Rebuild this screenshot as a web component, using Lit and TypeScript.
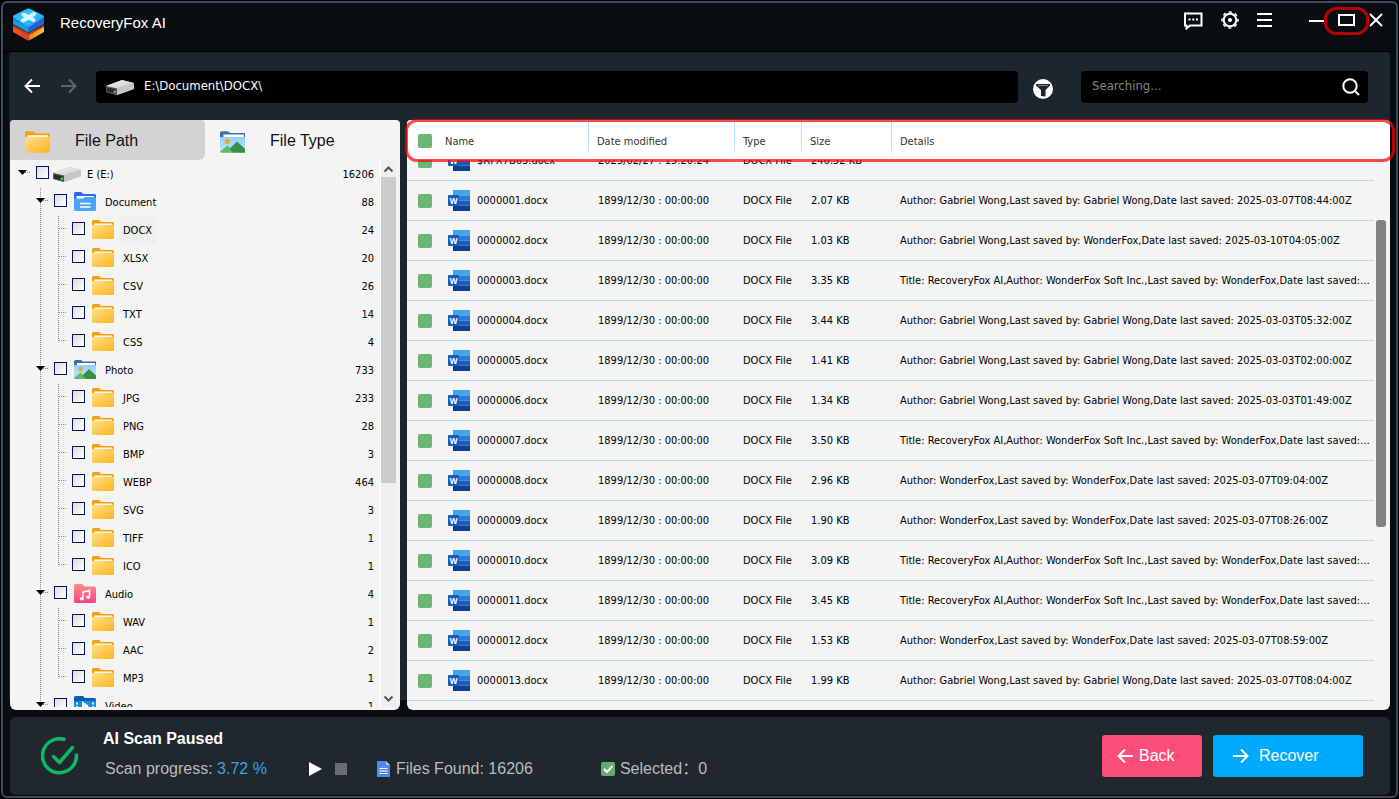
import { LitElement, html, css, svg, nothing } from "lit";
import { customElement } from "lit/decorators.js";
import { classMap } from "lit/directives/class-map.js";

type Kind = "drive" | "document" | "photo" | "audio" | "video" | "folder";
interface TreeRow { label: string; count: number; level: 0 | 1 | 2; kind: Kind; last?: boolean; selected?: boolean }
interface FileRow { name: string; date: string; size: string; details: string }

const leaf = (label: string, count: number, extra: Partial<TreeRow> = {}): TreeRow =>
  ({ label, count, level: 2, kind: "folder", ...extra });

const TREE: TreeRow[] = [
  { label: "E (E:)", count: 16206, level: 0, kind: "drive" },
  { label: "Document", count: 88, level: 1, kind: "document" },
  leaf("DOCX", 24, { selected: true }), leaf("XLSX", 20), leaf("CSV", 26), leaf("TXT", 14), leaf("CSS", 4, { last: true }),
  { label: "Photo", count: 733, level: 1, kind: "photo" },
  leaf("JPG", 233), leaf("PNG", 28), leaf("BMP", 3), leaf("WEBP", 464), leaf("SVG", 3), leaf("TIFF", 1), leaf("ICO", 1, { last: true }),
  { label: "Audio", count: 4, level: 1, kind: "audio" },
  leaf("WAV", 1), leaf("AAC", 2), leaf("MP3", 1, { last: true }),
  { label: "Video", count: 1, level: 1, kind: "video" },
];

const NO_DATE = "1899/12/30 : 00:00:00";
const byGabriel = (t: string) => `Author: Gabriel Wong,Last saved by: Gabriel Wong,Date last saved: ${t}`;
const byFox = (t: string) => `Author: WonderFox,Last saved by: WonderFox,Date last saved: ${t}`;
const titled = (t: string) => `Title: RecoveryFox AI,Author: WonderFox Soft Inc.,Last saved by: WonderFox,Date last saved: ${t}`;
const doc = (n: number, size: string, details: string): FileRow =>
  ({ name: `${String(n).padStart(7, "0")}.docx`, date: NO_DATE, size, details });

const FILES: FileRow[] = [
  { name: "$RFX7B63.docx", date: "2025/02/27 : 15:20:24", size: "246.52 KB", details: "" },
  doc(1, "2.07 KB", byGabriel("2025-03-07T08:44:00Z")),
  doc(2, "1.03 KB", "Author: Gabriel Wong,Last saved by: WonderFox,Date last saved: 2025-03-10T04:05:00Z"),
  doc(3, "3.35 KB", titled("2025-03-07T08:31:00Z")),
  doc(4, "3.44 KB", byGabriel("2025-03-03T05:32:00Z")),
  doc(5, "1.41 KB", byGabriel("2025-03-03T02:00:00Z")),
  doc(6, "1.34 KB", byGabriel("2025-03-03T01:49:00Z")),
  doc(7, "3.50 KB", titled("2025-03-07T08:52:00Z")),
  doc(8, "2.96 KB", byFox("2025-03-07T09:04:00Z")),
  doc(9, "1.90 KB", byFox("2025-03-07T08:26:00Z")),
  doc(10, "3.09 KB", titled("2025-03-07T08:40:00Z")),
  doc(11, "3.45 KB", titled("2025-03-07T08:47:00Z")),
  doc(12, "1.53 KB", byFox("2025-03-07T08:59:00Z")),
  doc(13, "1.99 KB", byGabriel("2025-03-07T08:04:00Z")),
];

const gradients = svg`<defs>
  <linearGradient id="gold" x1="0" y1="0" x2="1" y2="1"><stop offset="0" stop-color="#ffdf8a"/><stop offset="1" stop-color="#ffb31c"/></linearGradient>
  <linearGradient id="sky" x1="0" y1="0" x2="0" y2="1"><stop offset="0" stop-color="#8fd0fb"/><stop offset="1" stop-color="#c4e8fd"/></linearGradient>
  <linearGradient id="rose" x1="0" y1="0" x2="0" y2="1"><stop offset="0" stop-color="#ff8f84"/><stop offset="1" stop-color="#ff3f86"/></linearGradient>
  <linearGradient id="metal" x1="0" y1="0" x2="1" y2="1"><stop offset="0" stop-color="#f4f4f4"/><stop offset="1" stop-color="#c9c9c9"/></linearGradient>
  <linearGradient id="cyan" x1="0" y1="0" x2="1" y2="1"><stop offset="0" stop-color="#1fb4ff"/><stop offset=".5" stop-color="#2fc4ff"/><stop offset="1" stop-color="#1b86ee"/></linearGradient>
  <linearGradient id="fire" x1="0" y1="0" x2="1" y2="0"><stop offset="0" stop-color="#f2552c"/><stop offset=".5" stop-color="#d8411c"/><stop offset=".55" stop-color="#f08a1c"/><stop offset="1" stop-color="#ffc22e"/></linearGradient>
</defs>`;

const driveIcon = html`<svg class="drive" viewBox="0 0 30 17">${gradients}
  <path d="M1 7 17 1 29 4v6L12 16 1 13z" fill="#aeaeae"/>
  <path d="M1 7 17 1 29 4 12 9.500z" fill="url(#metal)"/>
  <path d="M12 9.500 29 4v6L12 16z" fill="#c6c6c6"/>
  <path d="M1 7 12 9.500V16L1 13z" fill="#555"/>
  <path d="M2 8.500 11 10.500V14.500L2 12.500z" fill="#2c2c2c"/>
  <rect x="8.500" y="11.500" width="2.500" height="2.500" fill="#22d03c"/></svg>`;

const icons: Record<Kind, unknown> = {
  drive: driveIcon,
  folder: html`<svg class="folder" viewBox="0 0 22 19">${gradients}
    <path d="M0 1.500Q0 0 1.500 0H7l2.500 2H20.500Q22 2 22 3.500V12H0z" fill="#f79f0c"/>
    <path d="M2.500 3.500h17.500v3H2.500z" fill="#fff"/>
    <path d="M0 5.500Q0 4.800 1 4.800H22V17.500Q22 19 20.500 19H1.500Q0 19 0 17.500z" fill="url(#gold)"/></svg>`,
  document: html`<svg class="folder" viewBox="0 0 22 19">
    <path d="M0 1.500Q0 0 1.500 0H7l2.500 2H20.500Q22 2 22 3.500V12H0z" fill="#2c66f2"/>
    <path d="M2.500 4h17.500v3H2.500z" fill="#fff"/>
    <path d="M0 6.500 9 6.500 11 5H22V17.500Q22 19 20.500 19H1.500Q0 19 0 17.500z" fill="#4aa3fd"/>
    <path d="M6 11.500H16.500M6 15H16.500" stroke="#fff" stroke-width="1.500"/></svg>`,
  photo: html`<svg class="folder" viewBox="0 0 22 19">${gradients}
    <path d="M0 1.500Q0 0 1.500 0H7l2 1.500H22V8H0z" fill="#3472ad"/>
    <path d="M3 3h18v3H3z" fill="#fff"/>
    <path d="M0 5H22V19H0z" fill="url(#sky)"/>
    <circle cx="6.500" cy="9" r="2.200" fill="#ffa114"/>
    <path d="M0 18 6.500 12.500 13 19H1z" fill="#5cc05c"/>
    <path d="M8.500 15.500 15 9 22 15.500V19H12z" fill="#359044"/></svg>`,
  audio: html`<svg class="folder" viewBox="0 0 22 19">${gradients}
    <path d="M0 1.500Q0 0 1.500 0H8l2.500 2.500H20.500Q22 2.500 22 4V17.500Q22 19 20.500 19H1.500Q0 19 0 17.500z" fill="url(#rose)"/>
    <path d="M9 14.500V8.200L15.500 6.500V13" fill="none" stroke="#fff" stroke-width="1.500"/>
    <ellipse cx="7.700" cy="14.700" rx="2" ry="1.700" fill="#fff"/><ellipse cx="14.200" cy="13.200" rx="2" ry="1.700" fill="#fff"/></svg>`,
  video: html`<svg class="folder" viewBox="0 0 22 19">
    <path d="M0 1.500Q0 0 1.500 0H9l2 2H20.500Q22 2 22 4V10H0z" fill="#0a5fb4"/>
    <path d="M0 5H22V17.500Q22 19 20.500 19H1.500Q0 19 0 17.500z" fill="#0f8fdc"/>
    <path d="M2 6.500h2v2H2zM2 10h2v2H2zM2 13.500h2v2H2zM18 6.500h2v2h-2zM18 10h2v2h-2zM18 13.500h2v2h-2z" fill="#e5f5ff"/>
    <path d="M8 5 15 10 8 15z" fill="#fff"/></svg>`,
};

const wordIcon = html`<svg class="word" viewBox="0 0 22 21" aria-hidden="true">
  <path d="M5 0H22V5.500H5z" fill="#41a5ee"/><path d="M5 5.500H22V10.500H5z" fill="#2b7cd3"/>
  <path d="M5 10.500H22V15.500H5z" fill="#185abd"/><path d="M5 15.500H22V21H5z" fill="#103f91"/>
  <rect y="5" width="11" height="11" rx="1" fill="#185abd"/>
  <text x="5.500" y="13.500" text-anchor="middle" font-size="8" font-weight="700" fill="#fff">W</text></svg>`;

const back = svg`<path d="M16 8H2M8 1.500 1.500 8 8 14.500"/>`;
const forward = svg`<path d="M0 8H14M8 1.500 14.500 8 8 14.500"/>`;

/** Draws the dotted connector lines and the expander of one tree level. */
const guide = (o: { up?: boolean; down?: boolean; branch?: boolean; open?: boolean }) => html`
  <svg class="guide" viewBox="0 0 18 28" aria-hidden="true">
    <g stroke="#8c8c8c" stroke-dasharray="1 1" shape-rendering="crispEdges">
      ${o.up ? svg`<path d="M9.500 0V13"/>` : nothing}
      ${o.down ? svg`<path d="M9.500 12V28"/>` : nothing}
      ${o.branch ? svg`<path d="M10 12.500H18"/>` : nothing}
    </g>
    ${o.open ? svg`<path d="M5 10H14L9.500 15z" fill="#000"/>` : nothing}
  </svg>`;

@customElement("file-tree")
export class FileTree extends LitElement {
  static styles = css`
    :host { display: flex; flex-direction: column; background: #f4f4f4; border-radius: 4px 4px 6px 6px; overflow: hidden; font-size: 11px; color: #000; }
    .tabs { display: grid; grid-template-columns: 1fr 1fr; flex: none; }
    .tab { display: flex; align-items: center; gap: 25px; height: 40px; padding: 2px 15px 0; border: 0; background: none; font: 16px "Liberation Sans", sans-serif; color: #111; }
    .tab.idle { background: #d3d3d3; border-radius: 4px 4px 6px 0; }
    .tab svg { width: 25px; height: 22px; margin-top: 2px; }
    .body { display: flex; flex: 1; min-height: 0; margin-bottom: 3px; padding-right: 4px; }
    ul { flex: 1; min-width: 0; margin: 0; padding: 0 6px 0 3px; list-style: none; overflow: hidden; }
    li { display: flex; align-items: center; height: 28px; }
    .guide { flex: none; width: 18px; height: 28px; }
    label { display: flex; align-items: center; height: 28px; }
    input { appearance: none; flex: none; box-sizing: border-box; width: 13px; height: 13px; margin: 0 7px 3px 5px; border: 1px solid #06125c; background: linear-gradient(135deg, #dcdce0, #fff); }
    .folder { width: 22px; height: 19px; margin-bottom: 1px; }
    .drive { width: 30px; height: 17px; margin-left: -4px; }
    .name { height: 28px; margin-left: 5px; padding: 0 4px; line-height: 29px; }
    .root .name { margin-left: 1px; }
    .selected { background: #efefef; }
    .count { margin-left: auto; }
    .scroll { display: flex; flex-direction: column; justify-content: space-between; flex: none; width: 15px; background: #efefef; border-left: 1px solid #fff; }
    .scroll svg { flex: none; width: 15px; height: 17px; fill: none; stroke: #555; stroke-width: 2; }
    .scroll .thumb { height: 56%; margin-bottom: auto; background: #cbcbcb; }
  `;

  private row(r: TreeRow) {
    return html`<li>
      ${r.level === 0 ? guide({ branch: true, open: true }) : html`<span class="guide"></span>`}
      ${r.level === 1 ? guide({ up: true, down: r.kind !== "video", branch: true, open: true }) : nothing}
      ${r.level === 2 ? html`${guide({ up: true, down: true })}${guide({ up: true, down: !r.last, branch: true })}` : nothing}
      <label class=${classMap({ root: r.level === 0 })}>
        <input type="checkbox" />${icons[r.kind]}
        <span class=${classMap({ name: true, selected: !!r.selected })}>${r.label}</span>
      </label>
      <span class="count">${r.count}</span>
    </li>`;
  }

  render() {
    return html`
      <div class="tabs" role="tablist">
        <button class="tab idle" role="tab" aria-selected="false">${icons.folder}File Path</button>
        <button class="tab" role="tab" aria-selected="true">${icons.photo}File Type</button>
      </div>
      <div class="body">
        <ul>${TREE.map((r) => this.row(r))}</ul>
        <div class="scroll">
          <svg viewBox="0 0 15 17"><path d="M3.500 11.500 7.500 7.500 11.500 11.500"/></svg>
          <div class="thumb"></div>
          <svg viewBox="0 0 15 17"><path d="M3.500 6.500 7.500 10.500 11.500 6.500"/></svg>
        </div>
      </div>`;
  }
}

@customElement("file-list")
export class FileList extends LitElement {
  static styles = css`
    :host { display: block; position: relative; background: #f4f4f4; border-radius: 4px 4px 6px 6px; font-size: 11px; color: #000; }
    .view { height: 100%; overflow: hidden; border-radius: inherit; }
    table { width: 100%; table-layout: fixed; border-collapse: separate; border-spacing: 0; margin-bottom: 40px; }
    .check { width: 38px; } .name { width: 143px; } .date { width: 146px; } .type { width: 67px; } .size { width: 90px; } .gutter { width: 16px; }
    th { position: sticky; top: 0; z-index: 1; box-sizing: border-box; height: 40px; padding: 2px 0 0 9px; background: #fff; font-weight: 400; text-align: left; color: #333; }
    th.rule { background: linear-gradient(#b4e2f4, #b4e2f4 60%, #fff) left 2px / 1px 36px no-repeat #fff; }
    th:nth-child(2) { padding-left: 0; }
    td { box-sizing: border-box; height: 40px; padding: 0 4px 0 10px; border-bottom: 1px solid #b9d8f5; white-space: nowrap; overflow: hidden; text-overflow: ellipsis; }
    td:nth-child(2) { padding-left: 3px; }
    td:nth-child(4) { padding-left: 9px; }
    td:nth-child(6) { padding-left: 9px; }
    td:last-child { border: 0; }
    td:first-child { padding: 0 0 0 11px; }
    th:first-child { padding: 2px 0 0 11px; }
    input { appearance: none; display: block; width: 14px; height: 14px; margin: 0; border-radius: 2px; background: #6bb577; }
    .file { display: flex; align-items: center; gap: 7px; }
    .word { flex: none; width: 22px; height: 21px; font-family: "Open Sans", sans-serif; }
    .thumb { position: absolute; top: 17%; right: 4px; width: 10px; height: 52%; border-radius: 3px; background: #828282; }
    .marker { position: absolute; z-index: 2; top: -1px; left: -2px; right: -5px; height: 43px; box-sizing: border-box; border: 3px solid rgba(255, 0, 0, 0.71); border-radius: 12px; pointer-events: none; }
  `;

  firstUpdated() {
    this.renderRoot.querySelector(".view")!.scrollTop = 19;
  }

  render() {
    return html`
      <div class="view">
        <table>
          <colgroup><col class="check" /><col class="name" /><col class="date" /><col class="type" /><col class="size" /><col /><col class="gutter" /></colgroup>
          <thead><tr>
            <th scope="col"><input type="checkbox" checked aria-label="Select all files" /></th>
            <th scope="col">Name</th><th scope="col" class="rule">Date modified</th><th scope="col" class="rule">Type</th>
            <th scope="col" class="rule">Size</th><th scope="col" class="rule">Details</th><th></th>
          </tr></thead>
          <tbody>${FILES.map((f) => html`<tr>
            <td><input type="checkbox" checked aria-label=${`Select ${f.name}`} /></td>
            <td><span class="file">${wordIcon}${f.name}</span></td>
            <td>${f.date}</td><td>DOCX File</td><td>${f.size}</td><td>${f.details}</td><td></td>
          </tr>`)}</tbody>
        </table>
      </div>
      <div class="thumb"></div>
      <div class="marker"></div>`;
  }
}

@customElement("app-root")
export class AppRoot extends LitElement {
  static styles = css`
    :host { display: block; box-sizing: border-box; height: 100vh; padding: 1px; background: #000; font-family: "DejaVu Sans Condensed", "DejaVu Sans", sans-serif; color: #fff; }
    button { margin: 0; padding: 0; border: 0; background: none; color: inherit; font: inherit; }
    svg { display: block; }
    .window { display: flex; flex-direction: column; box-sizing: border-box; height: 100%; border: 2px solid #3d4960; border-radius: 6px; background: #0a0d10; }
    .titlebar { display: flex; align-items: flex-start; box-sizing: border-box; height: 49px; flex: none; padding: 5px 13px 0 9px; border-bottom: 1px solid #000; }
    .logo { width: 33px; height: 33px; }
    h1 { flex: 1; margin: 5px 0 0 15px; font: 400 15px/20px "Liberation Sans", sans-serif; }
    .actions { display: flex; align-items: center; gap: 18px; height: 24px; }
    .actions svg, .caption svg { fill: none; stroke: #fff; stroke-width: 2; }
    .caption { display: flex; align-items: center; gap: 14px; height: 24px; margin-left: 36px; }
    .maximize { position: relative; }
    .marker { position: absolute; inset: -6px -14px -8px; border: 3px solid #b30000; border-radius: 12px; pointer-events: none; }
    .workspace { display: flex; flex-direction: column; flex: 1; min-height: 0; margin: 0 6px; padding-left: 1px; border-radius: 4px 4px 0 0; background: linear-gradient(#1b262d, #1b262d) 0 0 / 100% calc(100% - 10px) no-repeat; }
    .toolbar { display: flex; align-items: center; flex: none; height: 32px; padding: 19px 22px 17px 14px; }
    .toolbar svg { fill: none; stroke: currentColor; stroke-width: 2; }
    .nav { display: flex; gap: 21px; margin: 0 19px 2px 0; }
    .nav svg { width: 16px; height: 16px; }
    .nav .off { color: #5d656b; }
    .address { display: flex; align-items: center; gap: 9px; flex: 1; height: 32px; padding: 0 9px; border-radius: 4px; background: #000; font-size: 13px; line-height: 30px; }
    .address span { height: 32px; }
    .address svg { width: 30px; height: 17px; stroke: none; }
    .filter { margin: 4px 28px 0 15px; }
    .search { display: flex; align-items: center; box-sizing: border-box; width: 287px; height: 32px; padding: 0 8px 0 11px; border-radius: 4px; background: #000; }
    .search input { flex: 1; min-width: 0; height: 32px; box-sizing: border-box; padding: 0 0 3px; border: 0; outline: 0; background: none; color: #fff; font: 13px "DejaVu Sans Condensed", sans-serif; }
    .search input::placeholder { color: #858585; opacity: 1; }
    .panes { display: flex; gap: 7px; flex: 1; min-height: 0; }
    file-tree { flex: none; width: 390px; }
    file-list { flex: 1; min-width: 0; }
    footer { display: flex; align-items: center; box-sizing: border-box; flex: none; height: 78px; margin: 7px 6px 1px 7px; padding: 0 27px 0 31px; border-radius: 5px; background: #20272d; font: 16px/20px "Liberation Sans", "Noto Sans CJK SC", sans-serif; }
    .done { width: 38px; height: 38px; margin-right: 24px; }
    .status { flex: 1; padding-bottom: 4px; }
    h2 { margin: 0 0 10px; font-size: 16px; line-height: 20px; }
    .line { display: flex; align-items: center; padding-left: 2px; color: #b9bcbe; }
    .percent { color: #34a6ec; }
    .play { margin: 0 13px 0 42px; }
    .stop { margin-right: 30px; }
    .found, .picked { display: flex; align-items: center; gap: 6px; }
    .found { width: 224px; }
    .picked { gap: 5px; }
    .picked input { appearance: none; width: 14px; height: 14px; margin: 0; border-radius: 2px; background: #5fae6c; }
    .picked .box { display: grid; }
    .picked .box > * { grid-area: 1 / 1; }
    .buttons { display: flex; gap: 11px; }
    .primary, .danger { display: flex; align-items: center; height: 42px; border-radius: 3px; }
    .primary svg, .danger svg { width: 16px; height: 16px; fill: none; stroke: #fff; stroke-width: 2; }
    .danger { gap: 6px; width: 100px; padding-left: 15px; background: #fa4d79; }
    .primary { gap: 10px; width: 150px; padding-left: 20px; background: #00aaff; }
  `;

  render() {
    return html`<div class="window">
      <header class="titlebar">
        <svg class="logo" viewBox="0 0 33 33" aria-hidden="true">${gradients}
          <path d="M1 18 16.500 26 32 18V24L18 32Q16.500 33 15 32L1 24z" fill="url(#fire)"/>
          <path d="M1 17V19L16.500 27.500 32 19V17L16.500 25z" fill="#b5401a"/>
          <path d="M1 9V16L16.500 24.500 32 16V9z" fill="#1273d8"/>
          <path d="M1 11 16.500 19.500V24.500L1 16z" fill="#1c9be0"/>
          <path d="M32 9V16L16.500 24.500V19z" fill="#2a5fcb"/>
          <path d="M15 .8Q16.500 0 18 .8L31 7.300Q33 8.500 31 10L18 18.500Q16.500 19.500 15 18.500L2 10Q0 8.500 2 7.300z" fill="url(#cyan)"/>
          <path d="M11.500 6.500 21.500 12M22 6 11 12.500" stroke="#d9f5ff" stroke-width="4" stroke-linecap="round"/></svg>
        <h1>RecoveryFox AI</h1>
        <div class="actions">
          <button aria-label="Feedback"><svg width="20" height="20" viewBox="0 0 20 20"><path d="M2 3.500H18.500V15.500H7L3.500 18.500V15.500H2z"/><path d="M5.500 9.500h2M9.300 9.500h2M13 9.500h2"/></svg></button>
          <button aria-label="Settings"><svg width="18" height="18" viewBox="0 0 18 18"><circle cx="9" cy="9" r="6.300"/><circle cx="9" cy="9" r="8" stroke-width="1.500" stroke-dasharray="3.140 3.140" stroke-dashoffset="1.570"/><circle cx="9" cy="9" r="2" fill="#fff" stroke="none"/></svg></button>
          <button aria-label="Menu"><svg width="15" height="16" viewBox="0 0 15 16"><path d="M0 2H15M0 8H15M0 14H15"/></svg></button>
        </div>
        <div class="caption">
          <button aria-label="Minimize"><svg width="16" height="16" viewBox="0 0 16 16"><path d="M1 9H16"/></svg></button>
          <button class="maximize" aria-label="Maximize"><svg width="17" height="14" viewBox="0 0 17 14"><rect x="1" y="2" width="15" height="10"/></svg><span class="marker"></span></button>
          <button aria-label="Close"><svg width="14" height="14" viewBox="0 0 14 14"><path d="M1 1 13 13M13 1 1 13"/></svg></button>
        </div>
      </header>
      <main class="workspace">
        <div class="toolbar">
          <div class="nav">
            <button aria-label="Back"><svg viewBox="0 0 16 16">${back}</svg></button>
            <button class="off" aria-label="Forward"><svg viewBox="0 0 16 16">${forward}</svg></button>
          </div>
          <div class="address">${driveIcon}<span>E:\\Document\\DOCX\\</span></div>
          <button class="filter" aria-label="Filter"><svg width="20" height="20" viewBox="0 0 20 20"><circle cx="10" cy="10" r="10" fill="#fff" stroke="none"/><path d="M3 5H17V6.500L12.500 11V17.500L8 17V11L3 6.500z" fill="#1b262d" stroke="none"/><path d="M5 6.500H15" stroke="#7c8489" stroke-width="1"/></svg></button>
          <div class="search">
            <input type="text" placeholder="Searching..." aria-label="Search" />
            <button aria-label="Search"><svg width="18" height="18" viewBox="0 0 18 18"><circle cx="8" cy="8" r="6.700"/><path d="M12.500 12.500 17 17"/></svg></button>
          </div>
        </div>
        <div class="panes"><file-tree></file-tree><file-list></file-list></div>
      </main>
      <footer>
        <svg class="done" viewBox="0 0 38 38" fill="none" stroke="#0dba64" stroke-width="3.500" stroke-linecap="round" stroke-linejoin="round" aria-hidden="true"><path d="M23 2.300A17 17 0 1 0 35.500 18"/><path d="M12.500 19.500 18.500 25.500 31.500 10.500"/></svg>
        <div class="status">
          <h2>AI Scan Paused</h2>
          <div class="line">
            <span>Scan progress: <span class="percent">3.72 %</span></span>
            <button class="play" aria-label="Resume"><svg width="13" height="14" viewBox="0 0 13 14"><path d="M0 0 13 7 0 14z" fill="#fff"/></svg></button>
            <button class="stop" aria-label="Stop"><svg width="12" height="12" viewBox="0 0 12 12"><rect width="12" height="12" fill="#6a6d6f"/></svg></button>
            <span class="found"><svg width="13" height="16" viewBox="0 0 13 16"><path d="M0 0H9L13 4V16H0z" fill="#4c8bf5"/><path d="M9 0V4H13z" fill="#a9c8fb"/><path d="M2.500 7.500H10.500M2.500 10H10.500M2.500 12.500H10.500" stroke="#fff"/></svg>Files Found: 16206</span>
            <label class="picked"><span class="box"><input type="checkbox" checked /><svg width="14" height="14" viewBox="0 0 14 14" fill="none" stroke="#fff" stroke-width="2"><path d="M3 7 6 10 11.500 4"/></svg></span>Selected：0</label>
          </div>
        </div>
        <div class="buttons">
          <button class="danger"><svg viewBox="0 0 16 16">${back}</svg>Back</button>
          <button class="primary"><svg viewBox="0 0 16 16">${forward}</svg>Recover</button>
        </div>
      </footer>
    </div>`;
  }
}
